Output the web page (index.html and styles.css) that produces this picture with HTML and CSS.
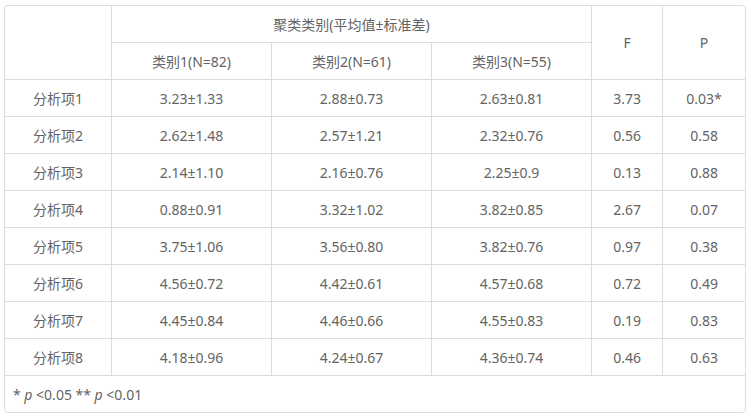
FILE: index.html
```html
<!DOCTYPE html>
<html lang="zh-CN">
<head>
<meta charset="utf-8">
<title>聚类类别</title>
<link rel="stylesheet" href="styles.css">
</head>
<body>
<div class="wrap">
<table class="grid">
<colgroup>
<col class="c-item"><col class="c-grp"><col class="c-grp"><col class="c-grp"><col class="c-f"><col class="c-p">
</colgroup>
<thead>
<tr>
<th rowspan="2"></th>
<th colspan="3">聚类类别(平均值±标准差)</th>
<th rowspan="2">F</th>
<th rowspan="2" class="last">P</th>
</tr>
<tr>
<th>类别1(N=82)</th>
<th>类别2(N=61)</th>
<th>类别3(N=55)</th>
</tr>
</thead>
<tbody>
<tr><td>分析项1</td><td>3.23±1.33</td><td>2.88±0.73</td><td>2.63±0.81</td><td>3.73</td><td class="last">0.03*</td></tr>
<tr><td>分析项2</td><td>2.62±1.48</td><td>2.57±1.21</td><td>2.32±0.76</td><td>0.56</td><td class="last">0.58</td></tr>
<tr><td>分析项3</td><td>2.14±1.10</td><td>2.16±0.76</td><td>2.25±0.9</td><td>0.13</td><td class="last">0.88</td></tr>
<tr><td>分析项4</td><td>0.88±0.91</td><td>3.32±1.02</td><td>3.82±0.85</td><td>2.67</td><td class="last">0.07</td></tr>
<tr><td>分析项5</td><td>3.75±1.06</td><td>3.56±0.80</td><td>3.82±0.76</td><td>0.97</td><td class="last">0.38</td></tr>
<tr><td>分析项6</td><td>4.56±0.72</td><td>4.42±0.61</td><td>4.57±0.68</td><td>0.72</td><td class="last">0.49</td></tr>
<tr><td>分析项7</td><td>4.45±0.84</td><td>4.46±0.66</td><td>4.55±0.83</td><td>0.19</td><td class="last">0.83</td></tr>
<tr><td>分析项8</td><td>4.18±0.96</td><td>4.24±0.67</td><td>4.36±0.74</td><td>0.46</td><td class="last">0.63</td></tr>
<tr class="foot"><td colspan="6" class="note last">* <i>p</i> &lt;0.05 ** <i>p</i> &lt;0.01</td></tr>
</tbody>
</table>
</div>
</body>
</html>
```
FILE: styles.css
```css
html, body {
  margin: 0;
  padding: 0;
  background: #fff;
}
body {
  padding: 5px 0 0 4px;
  font-family: "Noto Sans", "Noto Sans CJK SC", sans-serif;
  font-size: 14px;
  color: #646464;
}
.wrap {
  width: 740px;
  border: 1px solid #dcdcdc;
  border-radius: 4px;
  overflow: hidden;
}
.grid {
  width: 740px;
  table-layout: fixed;
  border-collapse: separate;
  border-spacing: 0;
}
.c-item { width: 107px; }
.c-grp { width: 160px; }
.c-f { width: 71px; }
.c-p { width: 82px; }
.grid th,
.grid td {
  height: 36px;
  padding: 0;
  text-align: center;
  vertical-align: middle;
  font-weight: normal;
  border-right: 1px solid #dcdcdc;
  border-bottom: 1px solid #dcdcdc;
  white-space: nowrap;
}
.grid .last {
  border-right: none;
}
.grid .foot td {
  border-bottom: none;
}
.grid td.note {
  text-align: left;
  padding-left: 8px;
}
```
